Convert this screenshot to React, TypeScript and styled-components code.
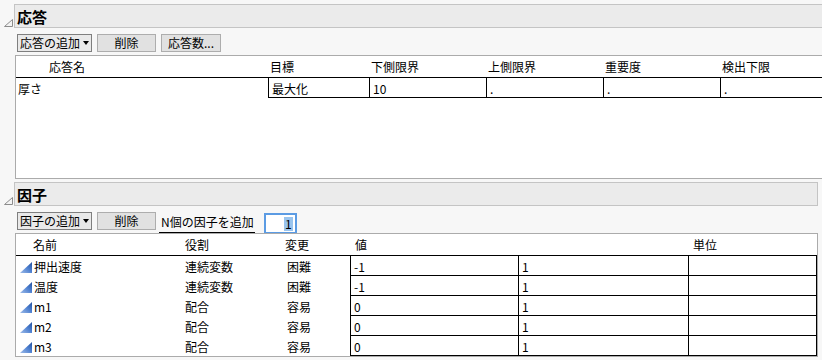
import React from 'react';
import styled, { createGlobalStyle } from 'styled-components';

const GlobalStyle = createGlobalStyle`
  body {
    margin: 0;
    background: #f7f7f7;
    font-family: "Noto Sans CJK JP", "Noto Sans", sans-serif;
    font-size: 12px;
    color: #000;
    overflow: hidden;
  }
`;

const Page = styled.div`
  width: 822px;
  height: 360px;
  overflow: hidden;
  padding-top: 4px;
  box-sizing: border-box;
  display: flex;
  flex-direction: column;
  gap: 3px;
`;

const Section = styled.div<{ $width: number }>`
  display: flex;
  width: ${p => p.$width}px;
`;

const Outline = styled.div`
  flex: none;
  width: 14px;
  padding: 9px 0 0 4px;
  box-sizing: border-box;
`;

const Body = styled.div`
  flex: 1;
  display: flex;
  flex-direction: column;
  min-width: 0;
`;

const TitleBar = styled.div`
  height: 24px;
  box-sizing: border-box;
  background: #ebebeb;
  border: 1px solid #c4c4c4;
  padding-left: 2px;
  display: flex;
  align-items: center;
`;

const Title = styled.span`
  font-size: 15px;
  font-weight: bold;
  line-height: 1;
`;

const Toolbar = styled.div`
  height: 21px;
  margin-top: 6px;
  padding-left: 3px;
  display: flex;
  align-items: flex-start;
  gap: 5px;
`;

const Button = styled.div<{ $w: number; $menu?: boolean }>`
  width: ${p => p.$w}px;
  height: 18px;
  box-sizing: border-box;
  background: ${p => (p.$menu ? '#e9e9e9' : '#e1e1e1')};
  border: 1px solid ${p => (p.$menu ? '#7f7f7f' : '#adadad')};
  display: flex;
  align-items: center;
  justify-content: ${p => (p.$menu ? 'flex-start' : 'center')};
  padding-left: ${p => (p.$menu ? '2px' : '0')};
  gap: 3px;
  line-height: 1;
  white-space: nowrap;
`;

const Caret = styled.span`
  width: 0;
  height: 0;
  border-left: 3.5px solid transparent;
  border-right: 3.5px solid transparent;
  border-top: 4px solid #000;
`;

const FieldLabel = styled.div`
  height: 21px;
  box-sizing: border-box;
  margin-left: -2px;
  padding: 0 1px 0 2px;
  border-bottom: 1px solid #000;
  display: flex;
  align-items: center;
  line-height: 1;
  white-space: nowrap;
`;

const NumberBox = styled.div`
  width: 33px;
  height: 21px;
  margin-left: 4px;
  margin-top: 1px;
  box-sizing: border-box;
  background: #fff;
  border: 2px solid #5b9be3;
  display: flex;
  align-items: center;
  justify-content: flex-end;
  padding-right: 2px;
  line-height: 1;
`;

const Selected = styled.span`
  background: #99c4ee;
  padding: 1px 1px;
`;

const Panel = styled.div<{ $width?: number }>`
  margin-left: 1px;
  width: ${p => (p.$width ? `${p.$width}px` : 'auto')};
  height: 124px;
  box-sizing: border-box;
  background: #fff;
  border: 1px solid #ababab;
  display: flex;
  flex-direction: column;
`;

const Grid = styled.div<{ $cols: string }>`
  display: grid;
  grid-template-columns: ${p => p.$cols};
`;

const HeadCell = styled.div<{ $pad: number; $span?: number }>`
  height: 22px;
  box-sizing: border-box;
  border-bottom: 1px solid #000;
  padding-left: ${p => p.$pad}px;
  grid-column: ${p => (p.$span ? `span ${p.$span}` : 'auto')};
  display: flex;
  align-items: center;
  white-space: nowrap;
  line-height: 1;
`;

const Cell = styled.div<{ $pad: number; $boxed?: boolean; $last?: boolean }>`
  height: 20px;
  box-sizing: border-box;
  padding: 2px 0 0 ${p => p.$pad}px;
  border-left: ${p => (p.$boxed ? '1px solid #000' : 'none')};
  border-bottom: ${p => (p.$boxed ? '1px solid #000' : 'none')};
  border-right: ${p => (p.$last ? '1px solid #000' : 'none')};
  display: flex;
  align-items: center;
  gap: 2px;
  white-space: nowrap;
  line-height: 1;
`;

const Disclosure = () => (
  <svg width="9" height="8" viewBox="0 0 9 8">
    <polygon points="8.5,0.5 8.5,7.5 0.5,7.5" fill="#f4f4f4" stroke="#8c8c8c" strokeWidth="1" />
  </svg>
);

const BlueWedge = () => (
  <svg width="12" height="11" viewBox="0 0 12 11">
    <defs>
      <linearGradient id="wedge" x1="0" y1="1" x2="1" y2="0">
        <stop offset="0" stopColor="#9dbbe9" />
        <stop offset="0.55" stopColor="#4d7fcf" />
        <stop offset="1" stopColor="#22509f" />
      </linearGradient>
    </defs>
    <polygon points="12,0 12,11 0,11" fill="url(#wedge)" />
  </svg>
);

const responseCols = '252px 101px 117px 117px 117px 117px';
const responseHeads = ['目標', '下側限界', '上側限界', '重要度', '検出下限'];
const responseRow = ['最大化', '10', '.', '.', '.'];

const factorCols = '164px 102px 68px 168px 170px 129px';
const factors = [
  { name: '押出速度', role: '連続変数', change: '困難', low: '-1', high: '1' },
  { name: '温度', role: '連続変数', change: '困難', low: '-1', high: '1' },
  { name: 'm1', role: '配合', change: '容易', low: '0', high: '1' },
  { name: 'm2', role: '配合', change: '容易', low: '0', high: '1' },
  { name: 'm3', role: '配合', change: '容易', low: '0', high: '1' },
];

const App: React.FC = () => {
  return (
    <>
      <GlobalStyle />
      <Page>
        <Section $width={850}>
          <Outline>
            <Disclosure />
          </Outline>
          <Body>
            <TitleBar>
              <Title>応答</Title>
            </TitleBar>
            <Toolbar>
              <Button $w={75} $menu>
                応答の追加
                <Caret />
              </Button>
              <Button $w={59}>削除</Button>
              <Button $w={60}>応答数...</Button>
            </Toolbar>
            <Panel>
              <Grid $cols={responseCols}>
                <HeadCell $pad={33}>応答名</HeadCell>
                {responseHeads.map(h => (
                  <HeadCell key={h} $pad={2}>
                    {h}
                  </HeadCell>
                ))}
                <Cell $pad={2}>厚さ</Cell>
                {responseRow.map((v, i) => (
                  <Cell key={i} $pad={3} $boxed>
                    {v}
                  </Cell>
                ))}
              </Grid>
            </Panel>
          </Body>
        </Section>

        <Section $width={818}>
          <Outline>
            <Disclosure />
          </Outline>
          <Body>
            <TitleBar>
              <Title>因子</Title>
            </TitleBar>
            <Toolbar>
              <Button $w={75} $menu>
                因子の追加
                <Caret />
              </Button>
              <Button $w={59}>削除</Button>
              <FieldLabel>N個の因子を追加</FieldLabel>
              <NumberBox>
                <Selected>1</Selected>
              </NumberBox>
            </Toolbar>
            <Panel $width={803}>
              <Grid $cols={factorCols}>
                <HeadCell $pad={17}>名前</HeadCell>
                <HeadCell $pad={5}>役割</HeadCell>
                <HeadCell $pad={3}>変更</HeadCell>
                <HeadCell $pad={5} $span={2}>
                  値
                </HeadCell>
                <HeadCell $pad={5}>単位</HeadCell>
                {factors.map(f => (
                  <React.Fragment key={f.name}>
                    <Cell $pad={4}>
                      <BlueWedge />
                      {f.name}
                    </Cell>
                    <Cell $pad={5}>{f.role}</Cell>
                    <Cell $pad={5}>{f.change}</Cell>
                    <Cell $pad={3} $boxed>
                      {f.low}
                    </Cell>
                    <Cell $pad={3} $boxed>
                      {f.high}
                    </Cell>
                    <Cell $pad={3} $boxed $last />
                  </React.Fragment>
                ))}
              </Grid>
            </Panel>
          </Body>
        </Section>
      </Page>
    </>
  );
};

export default App;
